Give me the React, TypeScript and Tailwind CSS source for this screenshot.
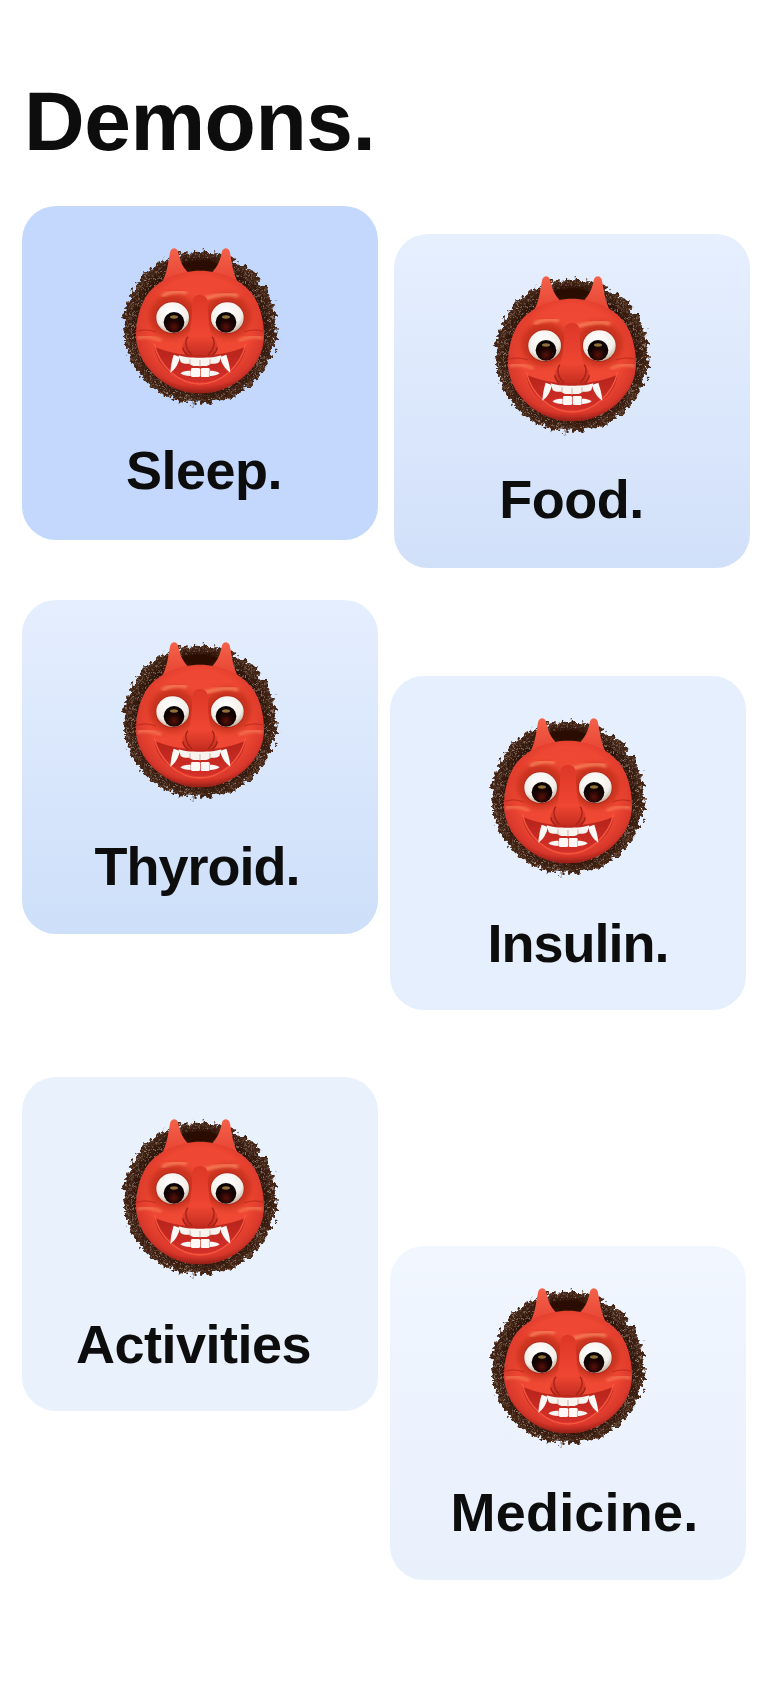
import React from 'react';

const cards = [
  { label: 'Sleep.', card: 'mb-[60px] bg-[#c3d8fc]', text: 'mt-[23px] ml-[8px] tracking-[-0.5px]' },
  { label: 'Thyroid.', card: 'mb-[143px] bg-gradient-to-b from-[#e5eefe] to-[#cddff9]', text: 'mt-[25px] ml-[-6px] tracking-[-1px]' },
  { label: 'Activities', card: 'bg-[#e9f1fd]', text: 'mt-[26px] ml-[-13px] tracking-[-0.5px]' },
];

const rightCards = [
  { label: 'Food.', card: 'ml-[4px] mb-[108px] bg-gradient-to-b from-[#e6effe] to-[#d1e0f9]', text: 'mt-[24px] ml-[-1px] tracking-[-0.5px]' },
  { label: 'Insulin.', card: 'mb-[236px] bg-[#e6effe]', text: 'mt-[26px] ml-[20px] tracking-[-1px]' },
  { label: 'Medicine.', card: 'bg-gradient-to-b from-[#f1f6ff] to-[#e8f0fc]', text: 'mt-[25px] ml-[13px] tracking-[0.2px]' },
];

const faceShape =
  'M300 122 C240 122 165 150 135 205 C118 235 108 275 108 318 C110 410 200 490 300 490 C400 490 492 410 492 318 C492 275 482 235 465 205 C435 150 360 122 300 122 Z';
const mouthShape = 'M163 350 C240 385 360 385 437 350 C428 412 372 456 300 456 C228 456 172 412 163 350 Z';

// Ogre emoji, drawn on a 600x570 canvas and shown at 200x190
const Ogre = () => (
  <svg viewBox="0 0 600 570" className="mt-6 h-[190px] w-[200px] shrink-0">
    <defs>
      <filter id="hairEdge" x="-10%" y="-10%" width="120%" height="120%" colorInterpolationFilters="sRGB">
        <feTurbulence type="fractalNoise" baseFrequency="0.065" numOctaves="4" seed="4" result="n" />
        <feDisplacementMap in="SourceGraphic" in2="n" scale="36" xChannelSelector="R" yChannelSelector="G" />
        <feGaussianBlur stdDeviation="0.9" />
      </filter>
      <filter id="hairSpeck" x="-5%" y="-5%" width="110%" height="110%" colorInterpolationFilters="sRGB">
        <feTurbulence type="fractalNoise" baseFrequency="0.16" numOctaves="3" seed="9" result="s" />
        <feColorMatrix
          in="s"
          type="matrix"
          values="0 0 0 0 0.56  0 0 0 0 0.47  0 0 0 0 0.41  2.2 2.2 0 0 -2.18"
          result="c"
        />
        <feComposite in="c" in2="SourceAlpha" operator="in" />
      </filter>
      <filter id="soft4"><feGaussianBlur stdDeviation="4" /></filter>
      <filter id="soft8"><feGaussianBlur stdDeviation="9" /></filter>
      <filter id="soft2"><feGaussianBlur stdDeviation="2" /></filter>
      <radialGradient id="hairFill" cx="50%" cy="50%" r="50%">
        <stop offset="80%" stopColor="#2a1208" />
        <stop offset="100%" stopColor="#452616" />
      </radialGradient>
      <radialGradient id="faceFill" cx="50%" cy="44%" r="58%">
        <stop offset="0%" stopColor="#f04c36" />
        <stop offset="68%" stopColor="#ee4733" />
        <stop offset="88%" stopColor="#d8382b" />
        <stop offset="100%" stopColor="#a6231a" />
      </radialGradient>
      <linearGradient id="hornFill" x1="0" y1="0" x2="0" y2="1">
        <stop offset="0%" stopColor="#f4624a" />
        <stop offset="100%" stopColor="#e5402f" />
      </linearGradient>
      <linearGradient id="noseFill" x1="0" y1="0" x2="0" y2="1">
        <stop offset="0%" stopColor="#dd3728" />
        <stop offset="65%" stopColor="#ee4632" />
        <stop offset="100%" stopColor="#bf2a1d" />
      </linearGradient>
      <linearGradient id="mouthFill" x1="0" y1="0" x2="0" y2="1">
        <stop offset="0%" stopColor="#b5231a" />
        <stop offset="100%" stopColor="#d5302a" />
      </linearGradient>
      <radialGradient id="eyeWhite" cx="45%" cy="30%" r="72%">
        <stop offset="0%" stopColor="#ffffff" />
        <stop offset="70%" stopColor="#f2eee8" />
        <stop offset="100%" stopColor="#bfae98" />
      </radialGradient>
      <radialGradient id="pupilFill" cx="50%" cy="72%" r="52%">
        <stop offset="0%" stopColor="#5a120a" />
        <stop offset="55%" stopColor="#200504" />
        <stop offset="100%" stopColor="#0b0202" />
      </radialGradient>
      <clipPath id="mouthClip">
        <path d={mouthShape} />
      </clipPath>
      <clipPath id="faceClip">
        <path d={faceShape} />
      </clipPath>
    </defs>

    {/* hair */}
    <g filter="url(#hairEdge)">
      <ellipse cx="300" cy="293" rx="230" ry="228" fill="url(#hairFill)" />
      <path
        d="M300 65 A228 228 0 1 1 299 65 Z M300 115 A178 178 0 1 0 301 115 Z"
        fillRule="evenodd"
        filter="url(#hairSpeck)"
      />
    </g>
    <ellipse cx="300" cy="106" rx="62" ry="20" fill="#2b1006" filter="url(#soft4)" />

    {/* horns */}
    <path d="M184 160 C204 128 205 88 211 64 C216 52 229 52 234 64 C238 85 244 106 262 125 L262 170 Z" fill="url(#hornFill)" />
    <path d="M416 160 C396 128 395 88 389 64 C384 52 371 52 366 64 C362 85 356 106 338 125 L338 170 Z" fill="url(#hornFill)" />

    {/* face */}
    <path d={faceShape} fill="url(#faceFill)" />
    <g clipPath="url(#faceClip)">
      <path d="M108 304 C135 297 150 300 168 306" stroke="#b9291d" strokeWidth="3" fill="none" filter="url(#soft2)" />
      <path d="M492 304 C465 297 450 300 432 306" stroke="#b9291d" strokeWidth="3" fill="none" filter="url(#soft2)" />
      <path d="M112 324 C140 316 160 320 184 332" stroke="#f8805a" strokeWidth="8" fill="none" filter="url(#soft4)" />
      <path d="M488 324 C460 316 440 320 416 332" stroke="#f8805a" strokeWidth="8" fill="none" filter="url(#soft4)" />
      {/* eye sockets */}
      <ellipse cx="218" cy="258" rx="72" ry="66" fill="#c8301f" filter="url(#soft8)" />
      <ellipse cx="382" cy="258" rx="72" ry="66" fill="#c8301f" filter="url(#soft8)" />
      <path d="M186 198 C205 186 235 182 260 188" stroke="#fa8c62" strokeWidth="8" fill="none" filter="url(#soft4)" />
      <path d="M414 198 C395 188 350 194 310 206" stroke="#fa8c62" strokeWidth="8" fill="none" filter="url(#soft4)" />
      <path d="M120 450 C210 510 390 510 480 450" stroke="#8d1a12" strokeWidth="24" fill="none" filter="url(#soft8)" />
    </g>

    {/* eyes */}
    <ellipse cx="218" cy="263" rx="52" ry="49" fill="#b5291d" />
    <ellipse cx="218" cy="263" rx="49" ry="46" fill="url(#eyeWhite)" />
    <ellipse cx="382" cy="263" rx="52" ry="49" fill="#b5291d" />
    <ellipse cx="382" cy="263" rx="49" ry="46" fill="url(#eyeWhite)" />
    <circle cx="222" cy="277" r="31" fill="url(#pupilFill)" />
    <circle cx="378" cy="277" r="31" fill="url(#pupilFill)" />
    <ellipse cx="222" cy="261" rx="12" ry="5" fill="#8f7038" filter="url(#soft2)" />
    <ellipse cx="378" cy="261" rx="12" ry="5" fill="#8f7038" filter="url(#soft2)" />

    {/* nose */}
    <path d="M278 210 C276 255 274 290 266 316 C262 328 246 332 248 352 C252 376 280 384 300 384 C320 384 348 376 352 352 C354 332 338 328 334 316 C326 290 324 255 322 210 C318 190 282 190 278 210 Z" fill="url(#noseFill)" />
    <path d="M248 352 C252 378 280 386 300 386 C320 386 348 378 352 352" stroke="#99201a" strokeWidth="4" fill="none" />
    <path d="M264 320 C252 332 258 360 276 374" stroke="#a32218" strokeWidth="4" fill="none" filter="url(#soft2)" />
    <path d="M336 320 C348 332 342 360 324 374" stroke="#a32218" strokeWidth="4" fill="none" filter="url(#soft2)" />
    <path d="M300 205 L300 350" stroke="#f77a5c" strokeWidth="14" fill="none" filter="url(#soft4)" />

    {/* mouth */}
    <path d={mouthShape} fill="url(#mouthFill)" />
    <path d="M163 350 C178 420 240 470 300 470 C360 470 422 420 437 350" stroke="#f4573f" strokeWidth="4" fill="none" filter="url(#soft2)" transform="translate(0 -8)" />
    <g clipPath="url(#mouthClip)">
      {/* upper teeth */}
      <path d="M236 376 C258 386 342 386 364 376 L358 396 C350 404 336 400 330 402 C326 410 304 408 300 408 C296 408 274 410 270 402 C264 400 250 404 242 396 Z" fill="#f7f4f0" />
      <path d="M270 388 L270 404 M300 390 L300 410 M330 388 L330 404" stroke="#c9a79c" strokeWidth="2.5" />
      {/* lower teeth */}
      <path d="M241 430 C248 423 262 422 272 422 L272 438 C258 438 248 436 241 430 Z" fill="#fbf8f5" />
      <path d="M359 430 C352 423 338 422 330 422 L330 438 C342 438 352 436 359 430 Z" fill="#fbf8f5" />
      <rect x="273" y="414" width="27" height="27" rx="4" fill="#fbf8f5" />
      <rect x="302" y="414" width="27" height="27" rx="4" fill="#fbf8f5" />
    </g>
    {/* fangs */}
    <path d="M221 374 L240 381 C236 400 226 418 211 428 C212 408 216 390 221 374 Z" fill="#fbf9f6" />
    <path d="M379 374 L360 381 C364 400 376 418 391 428 C390 408 384 390 379 374 Z" fill="#fbf9f6" />
  </svg>
);

const Card = ({ label, card, text }: { label: string; card: string; text: string }) => (
  <div className={`flex h-[334px] w-[356px] flex-col items-center rounded-[34px] ${card}`}>
    <Ogre />
    <div className={`text-[54px] leading-[54px] font-bold whitespace-nowrap text-[#0d0d0d] ${text}`}>{label}</div>
  </div>
);

export default function App() {
  return (
    <div className="min-h-[1688px] w-[780px] overflow-hidden bg-white font-['Liberation_Sans',Arial,sans-serif]">
      <h1 className="ml-[24px] pt-[79px] text-[84px] leading-[84px] font-bold tracking-[-0.5px] text-[#0d0d0d]">Demons.</h1>
      <div className="mt-[43px] flex pl-[22px]">
        <div className="w-[356px]">
          {cards.map((c) => (
            <Card key={c.label} {...c} />
          ))}
        </div>
        <div className="mt-[28px] ml-[12px] w-[360px]">
          {rightCards.map((c) => (
            <Card key={c.label} {...c} />
          ))}
        </div>
      </div>
    </div>
  );
}
